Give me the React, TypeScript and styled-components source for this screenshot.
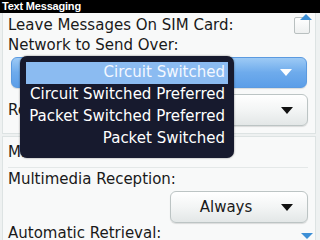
import styled, { createGlobalStyle } from 'styled-components';

const GlobalStyle = createGlobalStyle`
  html, body {
    margin: 0;
    padding: 0;
    width: 320px;
    height: 240px;
    overflow: hidden;
    background: #eef1f1;
  }
`;

const Screen = styled.div`
  position: relative;
  width: 320px;
  height: 240px;
  overflow: hidden;
  background: #eef1f1;
  font-family: 'DejaVu Sans', 'Liberation Sans', sans-serif;
  font-size: 15px;
  color: #1a1a1a;
`;

const TitleBar = styled.div`
  height: 13px;
  background: #000;
  color: #fff;
  font-family: 'Liberation Sans', Arial, sans-serif;
  font-weight: bold;
  font-size: 11px;
  line-height: 13px;
  padding-left: 2px;
  letter-spacing: -0.2px;
`;

const Body = styled.div`
  display: flex;
  flex-direction: column;
  gap: 2px;
  padding: 0 4px 0 2px;
`;

const Card = styled.div<{ $first?: boolean }>`
  background: #f8f9f9;
  border: 1px solid #dde3e3;
  border-top: ${(p) => (p.$first ? 'none' : '1px solid #dde3e3')};
  padding: ${(p) => (p.$first ? '2px 7px 7px 5px' : '0 7px 6px 5px')};
`;

const LabelRow = styled.div`
  display: flex;
  align-items: center;
  justify-content: space-between;
  height: 20px;
  white-space: nowrap;
`;

const SectionHead = styled(LabelRow)`
  height: 30px;
  border-bottom: 1px solid #e4e8e8;
  margin-bottom: 1px;
`;

const Checkbox = styled.div`
  width: 14px;
  height: 15px;
  margin-right: -2px;
  background: linear-gradient(#ffffff, #eef0f0);
  border: 1px solid #b9c0c0;
  border-radius: 2px;
`;

const FieldRow = styled.div`
  display: flex;
  align-items: center;
  justify-content: space-between;
  margin-top: 6px;
  white-space: nowrap;
`;

const Picker = styled.div<{ $active?: boolean; $width?: string }>`
  display: flex;
  align-items: center;
  flex: 0 0 auto;
  height: 32px;
  width: ${(p) => p.$width || 'auto'};
  box-sizing: border-box;
  border-radius: 6px;
  border: 1px solid ${(p) => (p.$active ? '#5b9ae0' : '#bcc4c4')};
  background: ${(p) =>
    p.$active
      ? 'linear-gradient(#9dcaf5, #6eabec 50%, #5c9ee8)'
      : 'linear-gradient(#ffffff, #f3f5f5 50%, #e3e7e7)'};
  box-shadow: 0 1px 1px rgba(0, 0, 0, 0.12);
  color: ${(p) => (p.$active ? '#fff' : '#1a1a1a')};
`;

const PickerText = styled.div`
  flex: 1;
  text-align: center;
`;

const Arrow = styled.div<{ $light?: boolean }>`
  width: 0;
  height: 0;
  margin-right: 14px;
  border-left: 6px solid transparent;
  border-right: 6px solid transparent;
  border-top: 7px solid ${(p) => (p.$light ? '#fff' : '#111')};
`;

const BluePicker = styled(Picker)`
  margin: 2px 1px 0 3px;
  height: 31px;
  justify-content: flex-end;
`;

const AlwaysRow = styled.div`
  display: flex;
  justify-content: flex-end;
  margin-top: 2px;
`;

const Menu = styled.div`
  position: absolute;
  left: 20px;
  top: 56px;
  width: 214px;
  height: 102px;
  box-sizing: border-box;
  padding: 6px 6px 0 6px;
  background: #171a2e;
  border-radius: 7px;
  box-shadow: 0 0 2px rgba(0, 0, 0, 0.5);
  color: #fff;
`;

const MenuItem = styled.div<{ $selected?: boolean }>`
  height: 22px;
  line-height: 21px;
  text-align: right;
  padding-right: 3px;
  white-space: nowrap;
  background: ${(p) => (p.$selected ? '#8bbbf1' : 'transparent')};
  color: ${(p) => (p.$selected ? '#f4f8ff' : '#fff')};
`;

const ScrollMark = styled.div<{ $up?: boolean }>`
  position: absolute;
  right: ${(p) => (p.$up ? '8px' : '7px')};
  top: ${(p) => (p.$up ? '14px' : '233px')};
  width: 0;
  height: 0;
  border-left: 6px solid transparent;
  border-right: 6px solid transparent;
  ${(p) =>
    p.$up
      ? 'border-bottom: 6px solid #3d8fd6;'
      : 'border-top: 6px solid #3d8fd6;'}
`;

const options = [
  'Circuit Switched',
  'Circuit Switched Preferred',
  'Packet Switched Preferred',
  'Packet Switched',
];

export default function App() {
  return (
    <Screen>
      <GlobalStyle />
      <TitleBar>Text Messaging</TitleBar>
      <Body>
        <Card $first>
          <LabelRow>
            <span>Leave Messages On SIM Card:</span>
            <Checkbox />
          </LabelRow>
          <LabelRow>Network to Send Over:</LabelRow>
          <BluePicker $active>
            <Arrow $light />
          </BluePicker>
          <FieldRow>
            <span>Reply:</span>
            <Picker $width="210px">
              <PickerText>Yes</PickerText>
              <Arrow />
            </Picker>
          </FieldRow>
        </Card>
        <Card>
          <SectionHead>MMS</SectionHead>
          <LabelRow>Multimedia Reception:</LabelRow>
          <AlwaysRow>
            <Picker $width="138px">
              <PickerText>Always</PickerText>
              <Arrow />
            </Picker>
          </AlwaysRow>
          <LabelRow>Automatic Retrieval:</LabelRow>
        </Card>
      </Body>
      <Menu>
        {options.map((o, i) => (
          <MenuItem key={o} $selected={i === 0}>
            {o}
          </MenuItem>
        ))}
      </Menu>
      <ScrollMark $up />
      <ScrollMark />
    </Screen>
  );
}
